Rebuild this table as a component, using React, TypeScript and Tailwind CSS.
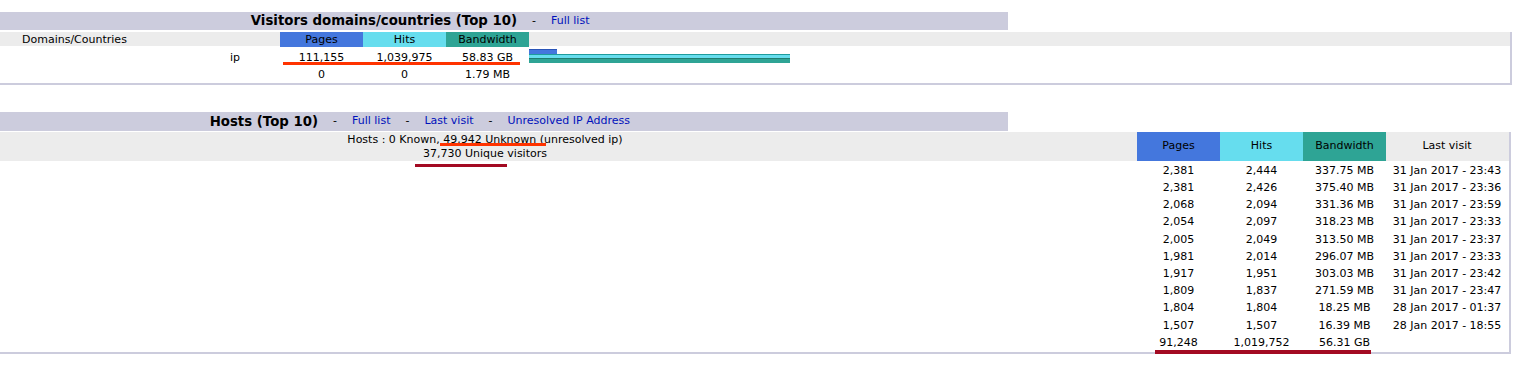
const hosts = [
  ['2,381', '2,444', '337.75 MB', '31 Jan 2017 - 23:43'],
  ['2,381', '2,426', '375.40 MB', '31 Jan 2017 - 23:36'],
  ['2,068', '2,094', '331.36 MB', '31 Jan 2017 - 23:59'],
  ['2,054', '2,097', '318.23 MB', '31 Jan 2017 - 23:33'],
  ['2,005', '2,049', '313.50 MB', '31 Jan 2017 - 23:37'],
  ['1,981', '2,014', '296.07 MB', '31 Jan 2017 - 23:33'],
  ['1,917', '1,951', '303.03 MB', '31 Jan 2017 - 23:42'],
  ['1,809', '1,837', '271.59 MB', '31 Jan 2017 - 23:47'],
  ['1,804', '1,804', '18.25 MB', '28 Jan 2017 - 01:37'],
  ['1,507', '1,507', '16.39 MB', '28 Jan 2017 - 18:55'],
  ['91,248', '1,019,752', '56.31 GB', ''],
];

function Sep() {
  return <span className="px-[15px] text-black">-</span>;
}

function Bar({ color, edge, width }: { color: string; edge: string; width: number }) {
  return (
    <div className={`h-[4.5px] border-t ${edge} ${color}`} style={{ width }} />
  );
}

export default function App() {
  return (
    <div
      className="relative h-[367px] w-[1516px] overflow-hidden bg-white pt-[12px] text-[11px] text-black"
      style={{ fontFamily: '"DejaVu Sans", Verdana, sans-serif' }}
    >
      {/* Visitors domains/countries */}
      <div className="flex h-[18px] w-[1008px] items-center bg-[#CCCCDD]">
        <div className="w-[517px] text-right text-[13.3px] font-bold">
          Visitors domains/countries (Top 10)
        </div>
        <Sep />
        <a className="text-[#0011BB]">Full list</a>
      </div>
      <div className="w-[1512px] border-r-2 border-b-2 border-[#CCCCDD]">
        <div className="mt-[2px] grid h-[14px] grid-cols-[280px_83px_83px_83px_1fr] bg-[#ECECEC] leading-[15px]">
          <div className="pl-[22px]">Domains/Countries</div>
          <div className="bg-[#4477DD] text-center">Pages</div>
          <div className="bg-[#66DDEE] text-center">Hits</div>
          <div className="bg-[#2EA495] text-center">Bandwidth</div>
          <div className="mr-[2px]" />
        </div>
        <div className="mt-[2px] grid grid-cols-[190px_90px_83px_83px_83px_1fr] pb-[1px]">
          <div className="h-[18px]" />
          <div className="pt-[1px] text-center leading-[18px]">ip</div>
          <div className="pt-[1px] text-center leading-[18px]">111,155</div>
          <div className="pt-[1px] text-center leading-[18px]">1,039,975</div>
          <div className="pt-[1px] text-center leading-[18px]">58.83 GB</div>
          <div className="pt-[1px]">
            <Bar color="bg-[#4477DD]" edge="border-[#2A55B8]" width={28} />
            <Bar color="bg-[#66DDEE]" edge="border-[#1E9C9C]" width={261} />
            <Bar color="bg-[#2EA495]" edge="border-[#1F7D70]" width={261} />
          </div>
          <div className="h-[15px]" />
          <div />
          <div className="text-center leading-[15px]">0</div>
          <div className="text-center leading-[15px]">0</div>
          <div className="text-center leading-[15px]">1.79 MB</div>
          <div />
        </div>
      </div>

      {/* Hosts */}
      <div className="mt-[27px] flex h-[19px] w-[1008px] items-center bg-[#CCCCDD]">
        <div className="w-[318px] text-right text-[13.3px] font-bold">Hosts (Top 10)</div>
        <Sep />
        <a className="text-[#0011BB]">Full list</a>
        <Sep />
        <a className="text-[#0011BB]">Last visit</a>
        <Sep />
        <a className="text-[#0011BB]">Unresolved IP Address</a>
      </div>
      <div className="w-[1511px] border-r-2 border-b-2 border-[#CCCCDD]">
        <div className="mt-[1px] grid h-[29px] grid-cols-[1137px_83px_83px_83px_122px_1fr] bg-[#ECECEC]">
          <div className="flex flex-col items-center justify-center pt-[1px] pr-[167px] leading-[14px]">
            <div>Hosts : 0 Known, 49,942 Unknown (unresolved ip)</div>
            <div>37,730 Unique visitors</div>
          </div>
          <div className="flex items-center justify-center bg-[#4477DD]">Pages</div>
          <div className="flex items-center justify-center bg-[#66DDEE]">Hits</div>
          <div className="flex items-center justify-center bg-[#2EA495]">Bandwidth</div>
          <div className="flex items-center justify-center">Last visit</div>
          <div />
        </div>
        <div className="pt-[1.5px]">
          {hosts.map((h, i) => (
            <div
              key={i}
              className="grid h-[17.2px] grid-cols-[1137px_83px_83px_83px_122px_1fr] items-center"
            >
              <div />
              <div className="text-center">{h[0]}</div>
              <div className="text-center">{h[1]}</div>
              <div className="text-center">{h[2]}</div>
              <div className="text-center">{h[3]}</div>
              <div />
            </div>
          ))}
        </div>
      </div>

      {/* annotation marks */}
      <div className="absolute top-[62px] left-[283px] h-[3px] w-[237px] bg-[#FF3300]" />
      <div className="absolute top-[143px] left-[440px] h-[3px] w-[106px] bg-[#FF3300]" />
      <div className="absolute top-[164px] left-[415px] h-[3px] w-[92px] bg-[#A30A22]" />
      <div className="absolute top-[350px] left-[1155px] h-[4px] w-[216px] bg-[#A30A22]" />
    </div>
  );
}
